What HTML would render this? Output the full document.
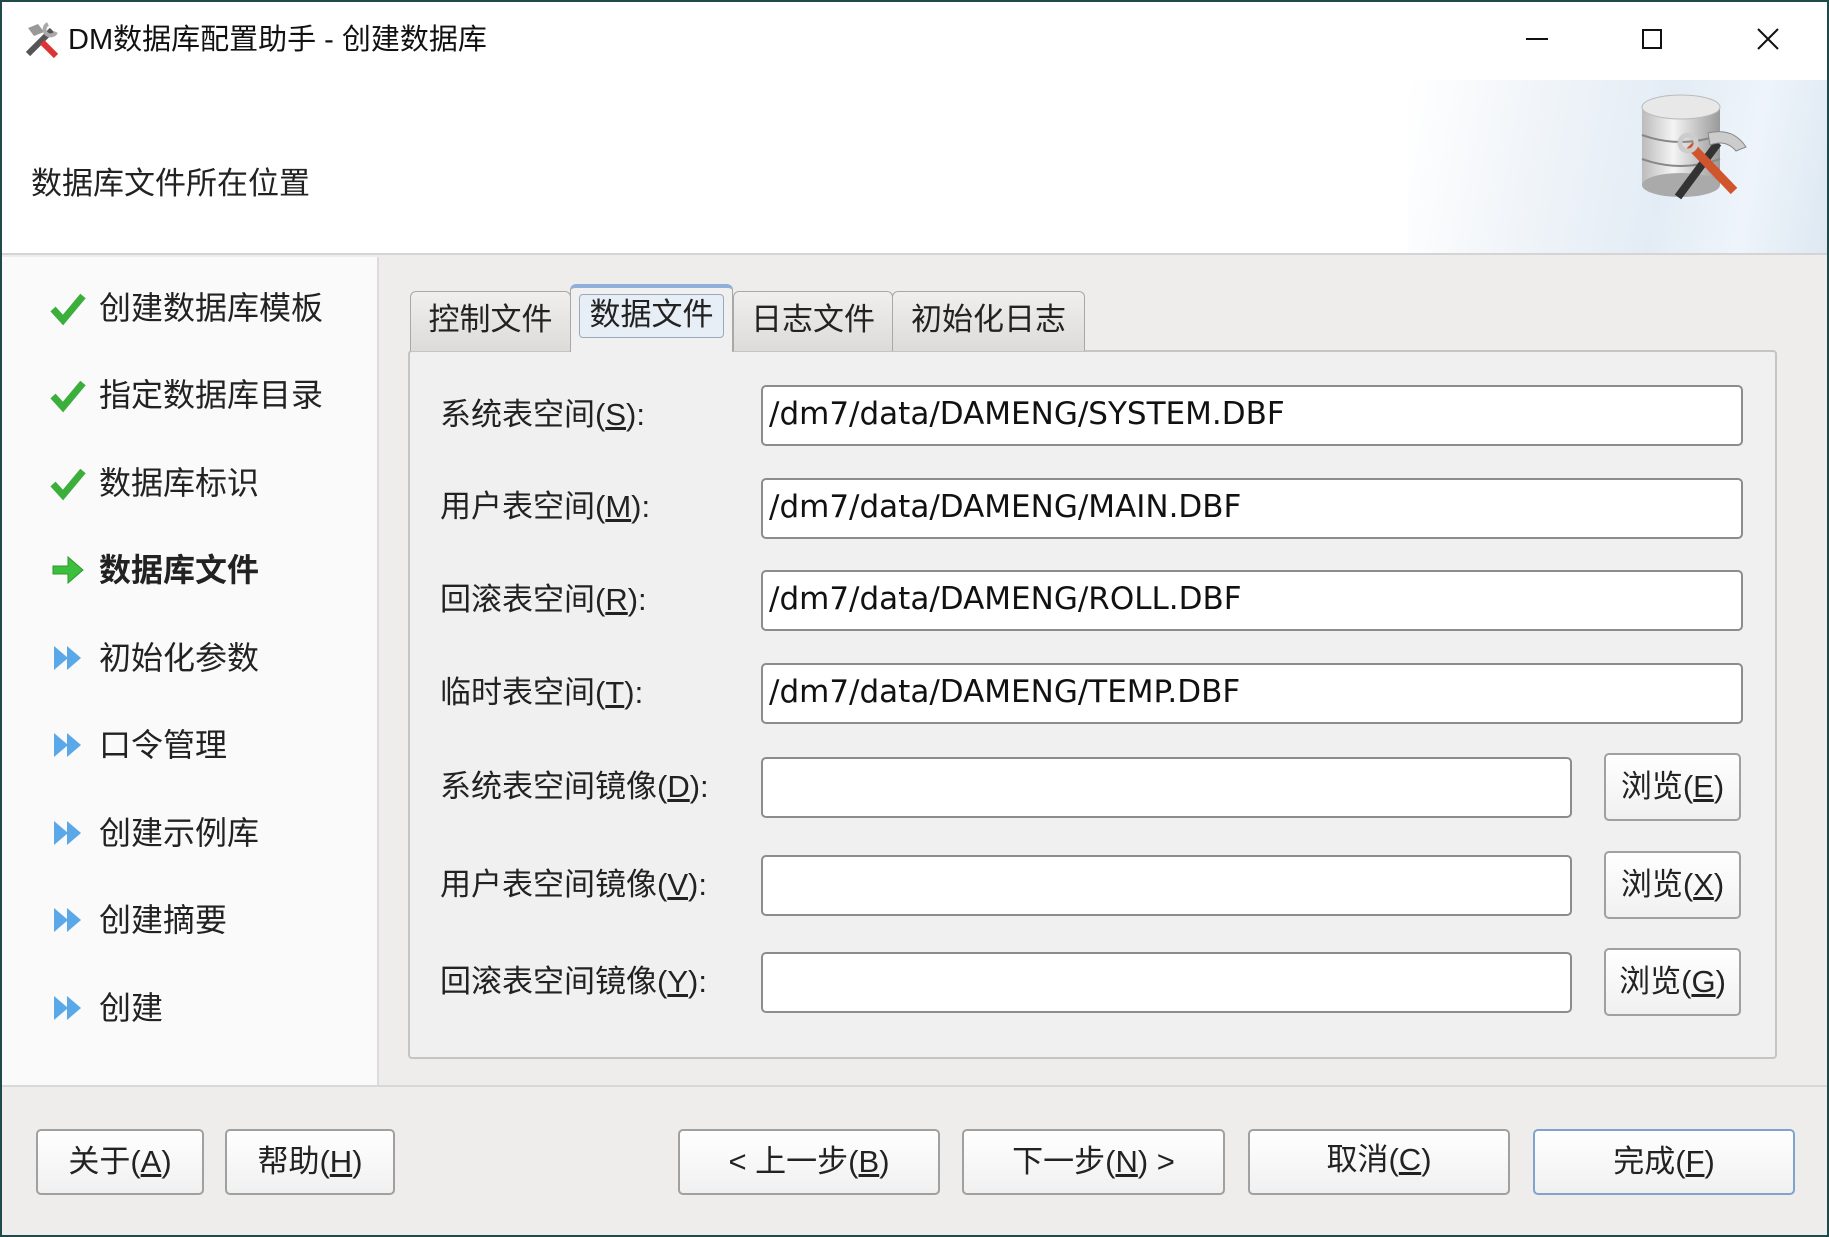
<!DOCTYPE html>
<html><head><meta charset="utf-8"><style>
*{box-sizing:border-box;margin:0;padding:0}
body{width:1829px;height:1237px;overflow:hidden;background:#1f4a4a;font-family:"Liberation Sans","Noto Sans CJK SC",sans-serif;color:#111}
#win{position:absolute;left:2px;top:2px;width:1825px;height:1233px;background:#eeedec;overflow:hidden}
.abs{position:absolute}
#title{left:0;top:0;width:1825px;height:76px;background:#fff}
#header{left:0;top:76px;width:1825px;height:177px;background:#fff;border-bottom:2px solid #d4d4d4}
#grad{left:1406px;top:2px;width:419px;height:173px;background:linear-gradient(100deg,#fff 0%,#eef3f8 35%,#e3ecf5 60%,#eef4fa 80%,#dde8f2 100%)}
#left{left:0;top:255px;width:377px;height:828px;background:#fafafa;border-right:2px solid #dcdcdc}
.item{position:absolute;left:97px;font-size:32px;line-height:40px;color:#222}
.ico{position:absolute;left:48px;width:36px;height:36px}
.tab{position:absolute;top:289px;height:60px;background:linear-gradient(#f0efee,#dcdbda);border:1px solid #a8a8a8;border-bottom:none;border-radius:6px 6px 0 0;font-size:31px;line-height:56px;text-align:center;color:#222}
#panel{left:406px;top:348px;width:1369px;height:709px;background:#f0f0f0;border:2px solid #c4c4c4;border-radius:4px}
.lbl{position:absolute;left:438px;font-size:31px;line-height:40px;color:#222}
.inp{position:absolute;left:759px;height:61px;background:#fff;border:2px solid #8c8c8c;border-radius:5px;font-family:"DejaVu Sans",sans-serif;font-size:31px;line-height:55px;padding-left:6px;color:#111}
.btn{position:absolute;background:linear-gradient(#fff,#f0f0f0);border:2px solid #a0a0a0;border-radius:5px;font-size:31px;text-align:center;color:#222}
u{text-decoration:underline}
</style></head><body><div id="win">
<div id="title" class="abs">
 <svg class="abs" style="left:20px;top:18px" width="40" height="40" viewBox="0 0 40 40"><path d="M6 34 L30 10" stroke="#555" stroke-width="6"/><path d="M20 22 L34 36" stroke="#d33" stroke-width="6"/><path d="M6 8 L16 4 L22 12 L12 16Z" fill="#999"/><path d="M26 4 a6 6 0 1 0 8 8" stroke="#aaa" stroke-width="4" fill="none"/></svg>
 <div class="abs" style="left:66px;top:20px;font-size:29px;line-height:36px;color:#111">DM数据库配置助手 - 创建数据库</div>
 <div class="abs" style="left:1524px;top:36px;width:22px;height:2px;background:#111"></div>
 <div class="abs" style="left:1640px;top:27px;width:20px;height:20px;border:2px solid #111"></div>
 <svg class="abs" style="left:1755px;top:26px" width="22" height="22"><path d="M1 1L21 21M21 1L1 21" stroke="#111" stroke-width="2"/></svg>
</div>
<div id="header" class="abs">
 <div id="grad" class="abs"></div>
 <div class="abs" style="left:29px;top:86px;font-size:31px;line-height:40px;color:#222">数据库文件所在位置</div>
 <svg class="abs" style="left:1636px;top:15px" width="120" height="112" viewBox="0 0 120 112">
  <defs><linearGradient id="g" x1="0" x2="1"><stop offset="0" stop-color="#bbb"/><stop offset=".4" stop-color="#f4f4f4"/><stop offset="1" stop-color="#999"/></linearGradient></defs>
  <rect x="4" y="14" width="78" height="78" fill="url(#g)"/><ellipse cx="43" cy="92" rx="39" ry="12" fill="#aaa"/><ellipse cx="43" cy="14" rx="39" ry="12" fill="#e8e8e8" stroke="#bbb"/>
  <path d="M4 42 Q43 56 82 42 M4 66 Q43 80 82 66" stroke="#888" stroke-width="2" fill="none"/>
  <path d="M40 104 L80 50" stroke="#333" stroke-width="8"/><path d="M52 52 L96 98" stroke="#d0542c" stroke-width="9"/><path d="M70 40 Q95 34 108 54 L98 58 Q88 46 72 52Z" fill="#ccc" stroke="#888"/><circle cx="50" cy="50" r="8" fill="none" stroke="#ccc" stroke-width="5"/>
 </svg>
</div>
<div id="left" class="abs">
 <svg class="ico" style="top:33px" viewBox="0 0 36 36"><path d="M3 19 L13 30 L33 6" stroke="#3cae3c" stroke-width="7" fill="none"/></svg>
 <div class="item" style="top:31px">创建数据库模板</div>
 <svg class="ico" style="top:120px" viewBox="0 0 36 36"><path d="M3 19 L13 30 L33 6" stroke="#3cae3c" stroke-width="7" fill="none"/></svg>
 <div class="item" style="top:118px">指定数据库目录</div>
 <svg class="ico" style="top:208px" viewBox="0 0 36 36"><path d="M3 19 L13 30 L33 6" stroke="#3cae3c" stroke-width="7" fill="none"/></svg>
 <div class="item" style="top:206px">数据库标识</div>
 <svg class="ico" style="top:295px" viewBox="0 0 36 36"><path d="M3 14 H18 V5 L33 18 L18 31 V22 H3Z" fill="#3cbf3c" stroke="#2a9a2a"/></svg>
 <div class="item" style="top:293px;font-weight:bold">数据库文件</div>
 <svg class="ico" style="top:383px" viewBox="0 0 36 36"><path d="M4 6 L18 18 L4 30Z M17 6 L31 18 L17 30Z" fill="#5aa8e8"/></svg>
 <div class="item" style="top:381px">初始化参数</div>
 <svg class="ico" style="top:470px" viewBox="0 0 36 36"><path d="M4 6 L18 18 L4 30Z M17 6 L31 18 L17 30Z" fill="#5aa8e8"/></svg>
 <div class="item" style="top:468px">口令管理</div>
 <svg class="ico" style="top:558px" viewBox="0 0 36 36"><path d="M4 6 L18 18 L4 30Z M17 6 L31 18 L17 30Z" fill="#5aa8e8"/></svg>
 <div class="item" style="top:556px">创建示例库</div>
 <svg class="ico" style="top:645px" viewBox="0 0 36 36"><path d="M4 6 L18 18 L4 30Z M17 6 L31 18 L17 30Z" fill="#5aa8e8"/></svg>
 <div class="item" style="top:643px">创建摘要</div>
 <svg class="ico" style="top:733px" viewBox="0 0 36 36"><path d="M4 6 L18 18 L4 30Z M17 6 L31 18 L17 30Z" fill="#5aa8e8"/></svg>
 <div class="item" style="top:731px">创建</div>
</div>
<div id="panel" class="abs"></div>
<div class="tab" style="left:408px;width:161px">控制文件</div>
<div class="tab" style="left:568px;top:282px;height:68px;width:163px;background:#f0f0f0;border-top:4px solid #8fb0d8"><div style="margin:6px 8px 0;height:44px;line-height:40px;border:1px solid #9ab;border-radius:4px;background:#e8eef6">数据文件</div></div>
<div class="tab" style="left:731px;width:160px">日志文件</div>
<div class="tab" style="left:890px;width:193px">初始化日志</div>
<div class="lbl" style="top:393px">系统表空间(<u>S</u>):</div>
<div class="inp" style="top:383px;width:982px">/dm7/data/DAMENG/SYSTEM.DBF</div>
<div class="lbl" style="top:485px">用户表空间(<u>M</u>):</div>
<div class="inp" style="top:476px;width:982px">/dm7/data/DAMENG/MAIN.DBF</div>
<div class="lbl" style="top:578px">回滚表空间(<u>R</u>):</div>
<div class="inp" style="top:568px;width:982px">/dm7/data/DAMENG/ROLL.DBF</div>
<div class="lbl" style="top:671px">临时表空间(<u>T</u>):</div>
<div class="inp" style="top:661px;width:982px">/dm7/data/DAMENG/TEMP.DBF</div>
<div class="lbl" style="top:765px">系统表空间镜像(<u>D</u>):</div>
<div class="inp" style="top:755px;width:811px"></div>
<div class="btn" style="left:1602px;top:751px;width:137px;height:68px;line-height:64px">浏览(<u>E</u>)</div>
<div class="lbl" style="top:863px">用户表空间镜像(<u>V</u>):</div>
<div class="inp" style="top:853px;width:811px"></div>
<div class="btn" style="left:1602px;top:849px;width:137px;height:68px;line-height:64px">浏览(<u>X</u>)</div>
<div class="lbl" style="top:960px">回滚表空间镜像(<u>Y</u>):</div>
<div class="inp" style="top:950px;width:811px"></div>
<div class="btn" style="left:1602px;top:946px;width:137px;height:68px;line-height:64px">浏览(<u>G</u>)</div>
<div class="abs" style="left:0;top:1083px;width:1825px;height:2px;background:#d8d8d8"></div>
<div class="btn" style="left:34px;top:1127px;width:168px;height:66px;line-height:62px">关于(<u>A</u>)</div>
<div class="btn" style="left:223px;top:1127px;width:170px;height:66px;line-height:62px">帮助(<u>H</u>)</div>
<div class="btn" style="left:676px;top:1127px;width:262px;height:66px;line-height:62px">&lt; 上一步(<u>B</u>)</div>
<div class="btn" style="left:960px;top:1127px;width:263px;height:66px;line-height:62px">下一步(<u>N</u>) &gt;</div>
<div class="btn" style="left:1246px;top:1127px;width:262px;height:66px;line-height:58px">取消(<u>C</u>)</div>
<div class="btn" style="left:1531px;top:1127px;width:262px;height:66px;line-height:62px;border-color:#7fa3cc">完成(<u>F</u>)</div>
</div></body></html>
